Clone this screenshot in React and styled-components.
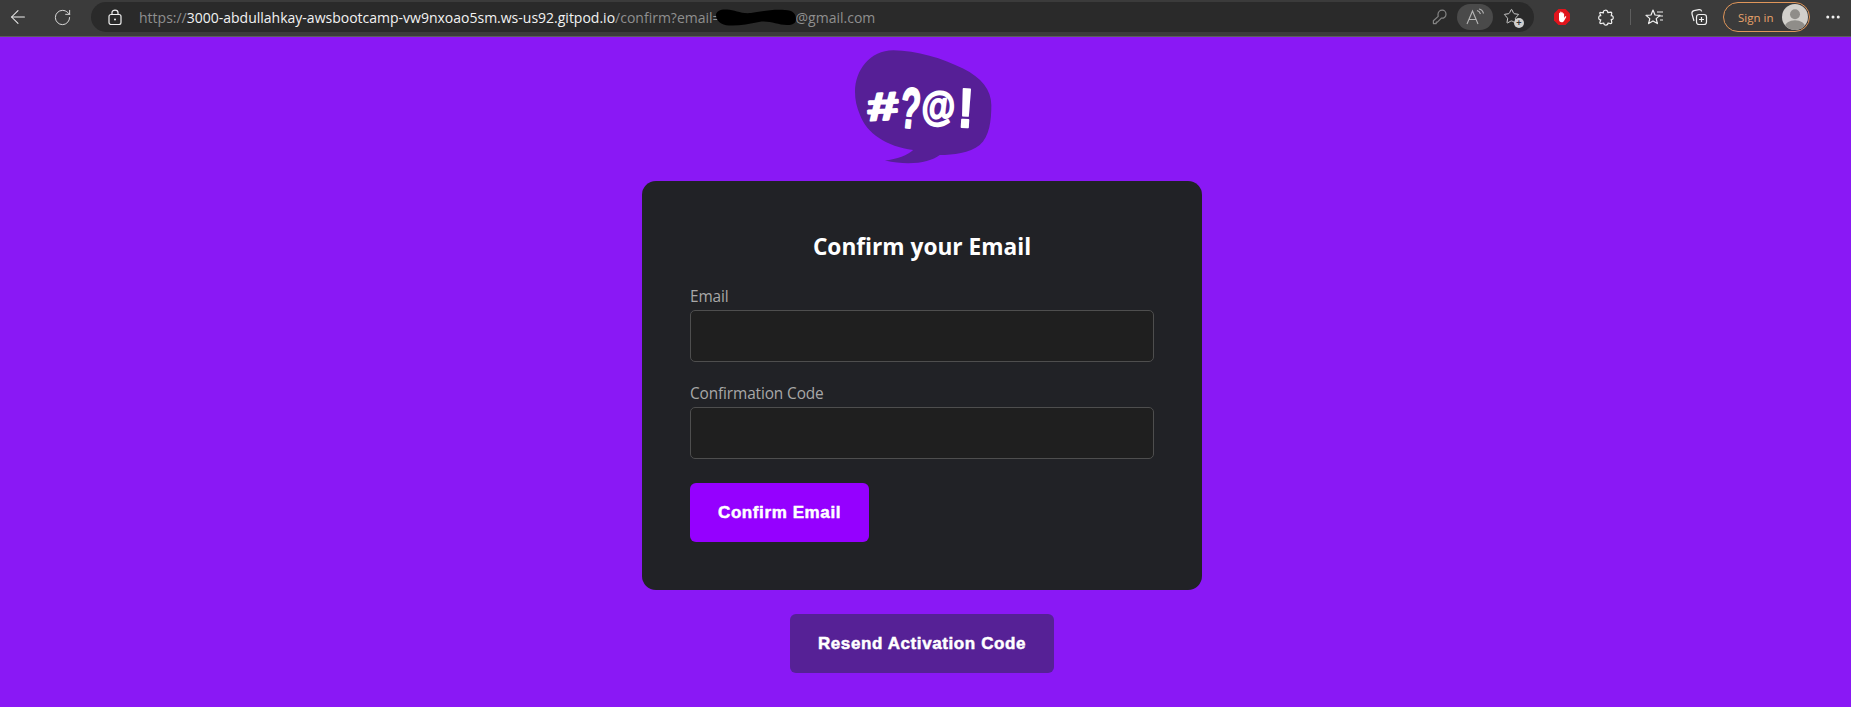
import React from 'react';
import styled, { createGlobalStyle } from 'styled-components';
import { ArrowLeft, RotateCw, Star, Ellipsis } from 'lucide-react';

const GlobalStyle = createGlobalStyle`
  html, body {
    margin: 0;
    padding: 0;
    height: 100%;
    background: #8a18f5;
  }
`;

function Logo() {
  return (
    <LogoSvg viewBox="75 30 412 345" width="137" height="115">
      <path
        fill="#561f96"
        d="M75 155 C75 90 120 30 190 30 C260 30 340 55 400 85 C455 112 485 150 485 195 C485 240 480 290 450 315 C420 340 370 345 330 345 C300 368 240 378 165 362 C200 358 235 345 250 330 C170 320 110 280 90 225 C80 200 75 180 75 155 Z"
      />
      <LogoGlyphs>
        <text x="112" y="240" fontSize="118" textLength="94" lengthAdjust="spacingAndGlyphs" transform="rotate(-3 158 198)">#</text>
        <text x="212" y="264" fontSize="172" textLength="60" lengthAdjust="spacingAndGlyphs" transform="rotate(6 243 200)">?</text>
        <text x="274" y="240" fontSize="120" textLength="102" lengthAdjust="spacingAndGlyphs" transform="rotate(-4 325 200)">@</text>
        <text x="386" y="262" fontSize="166" textLength="46" lengthAdjust="spacingAndGlyphs" transform="rotate(3 410 200)">!</text>
      </LogoGlyphs>
    </LogoSvg>
  );
}

function LockIcon() {
  return (
    <svg width="14" height="16" viewBox="0 0 14 16" fill="none" stroke="#f0f0f0" strokeWidth="1.2">
      <rect x="1" y="5.5" width="12" height="10" rx="2" />
      <path d="M4 5.5 V3.6 C4 0.4 10 0.4 10 3.6 V5.5" />
      <circle cx="7" cy="10.5" r="1" fill="#f0f0f0" stroke="none" />
    </svg>
  );
}

function RedactedMark() {
  return (
    <RedactedSvg viewBox="0 0 81 17" width="81" height="17">
      <path d="M1 6 C1 2 6 0 12 0.5 C20 1 26 5 36 4 C44 3 56 0 70 1 C78 1 81 5 81 10 C81 14 78 16 72 16 C62 16 54 11 44 13 C34 15 24 17 14 16.5 C6 16 1 12 1 6 Z" />
    </RedactedSvg>
  );
}

function KeyIcon() {
  return (
    <svg width="15" height="16" viewBox="0 0 15 16" fill="none" stroke="#858585" strokeWidth="1.2">
      <path d="M6 5.6 C6 3 8 1.2 10.2 1.2 C12.4 1.2 14 3 14 5.2 C14 7.6 12 9.4 9.4 9.2 L5.4 13.2 L4.2 13.2 L4.2 14.6 L1.4 14.6 L1.4 11.8 L6.2 7.4 Z" strokeLinejoin="round" />
    </svg>
  );
}

function ReadAloudIcon() {
  return (
    <svg width="20" height="18" viewBox="0 0 20 18" fill="none" stroke="#b5b5b5" strokeWidth="1.1">
      <path d="M2 16 L7.5 3 L13 16 M4 11.5 H11" />
      <path d="M12 2.5 C14 3 15 4.5 15.5 6 M14 1 C16.5 1.5 18 3.5 18.5 5.5" />
    </svg>
  );
}

function AddFavIcon() {
  return (
    <IconWrap>
      <Star size={17} strokeWidth={1.3} color="#d8d8d8" />
      <PlusBadge>+</PlusBadge>
    </IconWrap>
  );
}

function BlockerIcon() {
  return (
    <svg width="18" height="18" viewBox="0 0 18 18">
      <path fill="#e0141c" d="M5.5 1 H12.5 L17 5.5 V12.5 L12.5 17 H5.5 L1 12.5 V5.5 Z" />
      <path fill="#fff" d="M6 9 V5.5 C6 4.6 7.2 4.6 7.2 5.5 V4.2 C7.2 3.3 8.5 3.3 8.5 4.2 V4.8 C8.5 3.9 9.9 3.9 9.9 4.8 V5.8 C9.9 5 11.1 5 11.1 5.8 V10 L12 8.6 C12.6 7.8 13.6 8.4 13.1 9.3 L11 13 C10.4 14 9.6 14.2 8.8 14.2 C7 14.2 6 13 6 11.2 Z" />
    </svg>
  );
}

function PuzzleIcon() {
  return (
    <svg width="16" height="17" viewBox="0 0 16 17" fill="none" stroke="#f0f0f0" strokeWidth="1.2" strokeLinejoin="round">
      <path d="M2.6 3.4 L5.4 3.8 C4.6 0.6 10 0.2 9.8 3.6 L13 3.2 C13.6 3.2 13.8 3.6 13.8 4.2 L13.2 6.8 C15.8 6 16 11.4 13.2 10.4 L13.8 13.6 C13.8 14.2 13.4 14.6 12.8 14.6 L10 14 C10 16.8 5.6 16.8 5.8 14 L2.8 14.6 C2.2 14.6 1.8 14.2 1.8 13.6 L2.8 10.8 C0 11.6 0 5.8 2.8 6.8 L1.8 4.2 C1.8 3.6 2.1 3.3 2.6 3.4 Z" />
    </svg>
  );
}

function FavListIcon() {
  return (
    <svg width="20" height="18" viewBox="0 0 20 18" fill="none" stroke="#f0f0f0" strokeWidth="1.2">
      <path d="M8 2 L10 7 L15 7.4 L11.2 10.6 L12.4 15.6 L8 12.9 L3.6 15.6 L4.8 10.6 L1 7.4 L6 7 Z" strokeLinejoin="round" />
      <path d="M12 4 H18 M14 8 H18 M15 12 H18" />
    </svg>
  );
}

function CollectionsIcon() {
  return (
    <svg width="18" height="18" viewBox="0 0 18 18" fill="none" stroke="#f0f0f0" strokeWidth="1.2">
      <path d="M4 13 L2 6 C1.6 4 2.4 3 4 2.6 L9 1.6 C10.4 1.4 11.3 2 11.7 3.4" />
      <rect x="6.5" y="6.5" width="10" height="10" rx="2.5" />
      <path d="M11.5 9 V14 M9 11.5 H14" />
    </svg>
  );
}

function AvatarIcon() {
  return (
    <svg width="26" height="26" viewBox="0 0 24 24">
      <clipPath id="avatar-clip"><circle cx="12" cy="12" r="12" /></clipPath>
      <g clipPath="url(#avatar-clip)">
        <rect width="24" height="24" fill="#d2d0cc" />
        <circle cx="12" cy="9.5" r="4.6" fill="#8f8d89" />
        <ellipse cx="12" cy="21" rx="9.5" ry="6" fill="#8f8d89" />
      </g>
    </svg>
  );
}

export default function App() {
  return (
    <Page>
      <GlobalStyle />
      <Toolbar>
        <BackSlot><ArrowLeft size={22} strokeWidth={1.1} color="#f0f0f0" /></BackSlot>
        <RefreshSlot><RotateCw size={19} strokeWidth={1.1} color="#f0f0f0" /></RefreshSlot>
        <Omnibox>
          <LockSlot><LockIcon /></LockSlot>
          <Url>
            <Dim>https://</Dim>
            <Host>3000-abdullahkay-awsbootcamp-vw9nxoao5sm.ws-us92.gitpod.io</Host>
            <Dim>/confirm?email=</Dim>
            <RedactedMark />
            <Dim>@gmail.com</Dim>
          </Url>
          <OmniActions>
            <KeyIcon />
            <ReadAloud><ReadAloudIcon /></ReadAloud>
            <AddFavIcon />
          </OmniActions>
        </Omnibox>
        <Extensions>
          <ExtSlot><BlockerIcon /></ExtSlot>
          <ExtSlot><PuzzleIcon /></ExtSlot>
          <Divider />
          <ExtSlot><FavListIcon /></ExtSlot>
          <ExtSlot><CollectionsIcon /></ExtSlot>
        </Extensions>
        <SignIn>
          <SignInLabel>Sign in</SignInLabel>
          <AvatarIcon />
        </SignIn>
        <More><Ellipsis size={18} color="#f0f0f0" /></More>
      </Toolbar>
      <Content>
        <Logo />
        <Card>
          <Title>Confirm your Email</Title>
          <Field>
            <Label>Email</Label>
            <Input type="text" />
          </Field>
          <Field>
            <Label>Confirmation Code</Label>
            <Input type="text" />
          </Field>
          <PrimaryButton>Confirm Email</PrimaryButton>
        </Card>
        <ResendButton>Resend Activation Code</ResendButton>
      </Content>
    </Page>
  );
}

const Page = styled.div`
  min-height: 707px;
  background: #8a18f5;
  font-family: "Open Sans", "Noto Sans", sans-serif;
  overflow: hidden;
`;
const Toolbar = styled.div`
  display: flex;
  align-items: center;
  height: 37px;
  padding-bottom: 2px;
  box-sizing: border-box;
  background: #3b3b3b;
  border-bottom: 1px solid #5c5c5c;
`;
const BackSlot = styled.div`
  display: flex;
  align-items: center;
  justify-content: center;
  width: 36px;
  flex: none;
`;
const RefreshSlot = styled(BackSlot)`
  width: 44px;
  margin-left: 4px;
`;
const Omnibox = styled.div`
  display: flex;
  align-items: center;
  width: 1443px;
  height: 30px;
  margin-left: 7px;
  border-radius: 15px;
  background: #2a2a2a;
  flex: none;
`;
const LockSlot = styled.div`
  display: flex;
  justify-content: center;
  width: 48px;
  flex: none;
`;
const Url = styled.div`
  display: flex;
  align-items: center;
  flex: 1;
  font-size: 14px;
  white-space: nowrap;
`;
const Dim = styled.span`
  color: #8f8f8f;
`;
const Host = styled.span`
  color: #f2f2f2;
`;
const RedactedSvg = styled.svg`
  display: block;
  flex: none;
  margin-left: -6px;
  fill: #000;
`;
const OmniActions = styled.div`
  display: flex;
  align-items: center;
  gap: 10px;
  padding-right: 13px;
`;
const ReadAloud = styled.div`
  display: flex;
  align-items: center;
  justify-content: center;
  width: 36px;
  height: 26px;
  border-radius: 13px;
  background: #4a4a4a;
`;
const IconWrap = styled.div`
  position: relative;
  display: flex;
  width: 18px;
  height: 18px;
`;
const PlusBadge = styled.span`
  position: absolute;
  right: -3px;
  bottom: -2px;
  width: 10px;
  height: 10px;
  border-radius: 50%;
  background: #cfcfcf;
  color: #333;
  font: 700 9px/10px "Liberation Sans", sans-serif;
  text-align: center;
`;
const Extensions = styled.div`
  display: flex;
  align-items: center;
  margin-left: 6px;
  flex: none;
`;
const ExtSlot = styled.div`
  display: flex;
  align-items: center;
  justify-content: center;
  width: 44px;
`;
const Divider = styled.span`
  width: 1px;
  height: 16px;
  margin: 0 2px;
  background: #5e5e5e;
`;
const SignIn = styled.div`
  display: flex;
  align-items: center;
  justify-content: space-between;
  width: 87px;
  height: 30px;
  margin-left: 2px;
  padding: 0 1px 0 14px;
  box-sizing: border-box;
  border: 1px solid #e0965a;
  border-radius: 15px;
  flex: none;
`;
const SignInLabel = styled.span`
  color: #e8a36b;
  font-size: 11.5px;
`;
const More = styled.div`
  display: flex;
  margin-left: 14px;
`;
const Content = styled.main`
  display: flex;
  flex-direction: column;
  align-items: center;
  padding-right: 7px;
`;
const LogoSvg = styled.svg`
  display: block;
  margin: 13px 0 16px 3px;
`;
const LogoGlyphs = styled.g`
  fill: #fff;
  stroke: #fff;
  stroke-width: 6;
  stroke-linejoin: round;
  font-family: "Liberation Sans", sans-serif;
  font-weight: 700;
`;
const Card = styled.section`
  width: 560px;
  box-sizing: border-box;
  padding: 50px 48px 48px;
  background: #212226;
  border-radius: 14px;
`;
const Title = styled.h2`
  margin: 0 0 22px;
  color: #fff;
  font-size: 22.7px;
  line-height: 32px;
  font-weight: 700;
  text-align: center;
`;
const Field = styled.div`
  display: flex;
  flex-direction: column;
  margin-bottom: 20px;
`;
const Label = styled.label`
  color: #a8a8a8;
  font-size: 15.4px;
  letter-spacing: -0.12px;
  line-height: 23px;
  margin-bottom: 2px;
`;
const Input = styled.input`
  width: 100%;
  height: 52px;
  box-sizing: border-box;
  background: #1f1f1f;
  border: 1px solid #4e4e4e;
  border-radius: 5px;
  outline: none;
`;
const PrimaryButton = styled.button`
  display: block;
  height: 59px;
  margin-top: 24px;
  padding: 1px 28px 0;
  border: 0;
  border-radius: 6px;
  background: #9500ff;
  color: #fff;
  font: 700 17px "Liberation Sans", Arial, sans-serif;
  -webkit-text-stroke: 0.5px #fff;
  letter-spacing: 0.6px;
`;
const ResendButton = styled(PrimaryButton)`
  background: #562196;
`;
